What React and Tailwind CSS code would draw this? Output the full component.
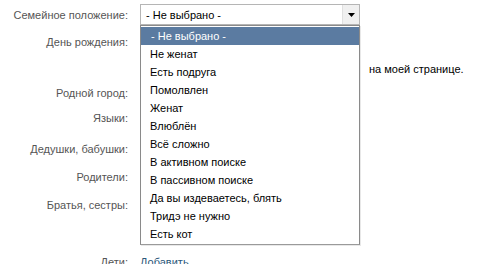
import React from "react";

const options = [
  "- Не выбрано -",
  "Не женат",
  "Есть подруга",
  "Помолвлен",
  "Женат",
  "Влюблён",
  "Всё сложно",
  "В активном поиске",
  "В пассивном поиске",
  "Да вы издеваетесь, блять",
  "Тридэ не нужно",
  "Есть кот",
];

function Row({ label, h, children }) {
  return (
    <div className={"flex items-center " + h}>
      <div className="w-[129px] shrink-0 text-right pr-[1px] whitespace-nowrap text-[#555555]">{label}</div>
      <div className="pl-[11px] flex-1 whitespace-nowrap">{children}</div>
    </div>
  );
}

export default function App() {
  return (
    <div className="relative w-[494px] h-[264px] overflow-hidden bg-white text-[11px] leading-[14px] font-['Tahoma','Liberation_Sans',sans-serif]">
      <div className="flex flex-col pt-[4px]">
        <Row label="Семейное положение:" h="h-[21px]">
          <div className="flex h-[21px] w-[220px] border border-[#b5b5b5] bg-white">
            <div className="flex-1 flex items-center pl-[5px] text-black">- Не выбрано -</div>
            <div className="w-[17px] flex items-center justify-center bg-[#f0f0f0] border-l border-[#e0e0e0]">
              <svg width="7" height="4" viewBox="0 0 7 4"><path d="M0 0h7L3.5 4z" fill="#000" /></svg>
            </div>
          </div>
        </Row>
        <div className="h-[8px]" />
        <Row label="День рождения:" h="h-[18px]" />
        <div className="flex h-[29px] pt-[7px] items-center">
          <div className="w-[369px] shrink-0" />
          <div className="text-black whitespace-nowrap">на моей странице.</div>
        </div>
        <Row label="Родной город:" h="h-[25px]" />
        <Row label="Языки:" h="h-[25px]" />
        <Row label="Дедушки, бабушки:" h="h-[38px]" />
        <Row label="Родители:" h="h-[18px]" />
        <Row label="Братья, сестры:" h="h-[38px]" />
        <div className="h-[29px]" />
        <Row label="Дети:" h="h-[18px]">
          <span className="text-[#2b587a]">Добавить</span>
        </Row>
      </div>

      <div className="absolute left-[140px] top-[25px] w-[220px] border border-[#8a8a8a] border-b-[#9a9a9a] bg-white py-[1px] shadow-[1px_1px_0_#e8e8e8]">
        {options.map((o, i) => (
          <div
            key={o}
            className={
              "h-[18px] flex items-center whitespace-nowrap " +
              (i === 0 ? "bg-[#5b7ba1] text-white pl-[10px]" : "text-black pl-[9px]")
            }
          >
            {o}
          </div>
        ))}
      </div>
    </div>
  );
}
